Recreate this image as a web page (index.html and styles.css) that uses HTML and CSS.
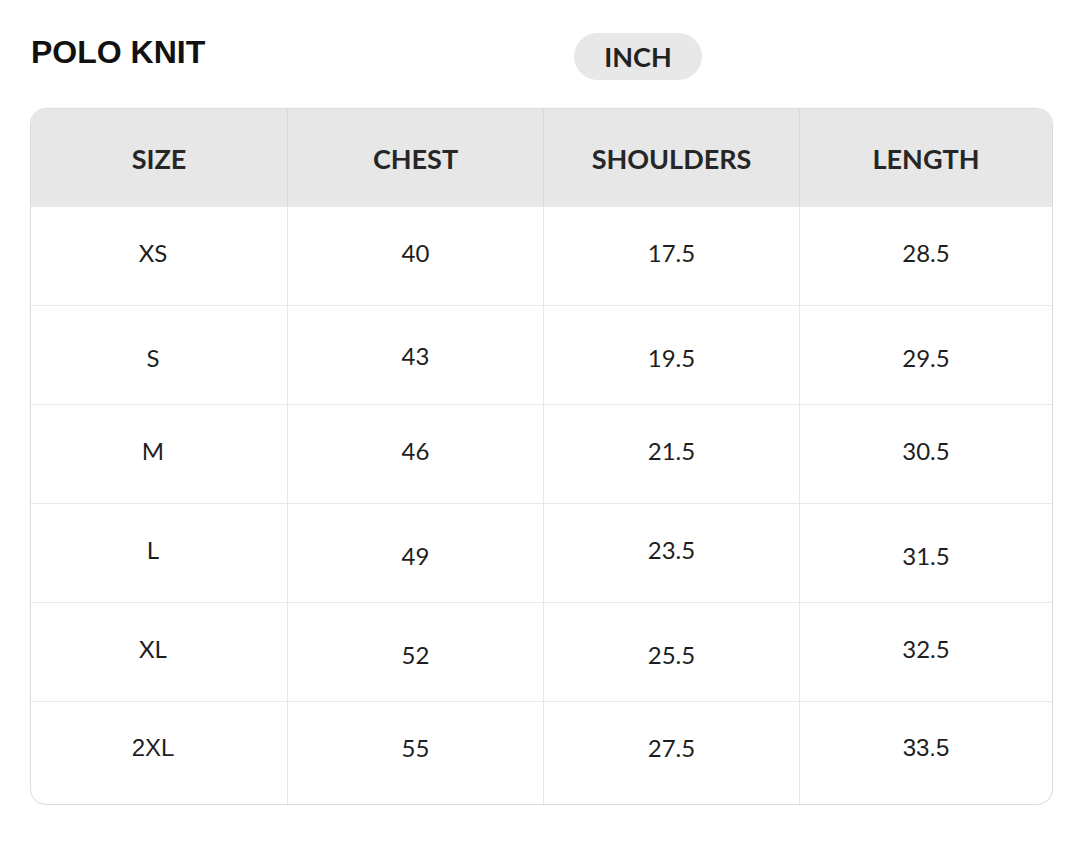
FILE: index.html
```html
<!DOCTYPE html>
<html lang="en">
<head>
<meta charset="utf-8">
<title>Polo Knit Size Chart</title>
<link rel="stylesheet" href="styles.css">
</head>
<body>
<div class="page">
  <div class="top">
    <h1 class="title">POLO KNIT</h1>
    <span class="unit">INCH</span>
  </div>
  <div class="chart">
    <div class="row head">
      <div class="cell">SIZE</div>
      <div class="cell">CHEST</div>
      <div class="cell">SHOULDERS</div>
      <div class="cell">LENGTH</div>
    </div>
    <div class="row">
      <div class="cell size">XS</div>
      <div class="cell">40</div>
      <div class="cell">17.5</div>
      <div class="cell">28.5</div>
    </div>
    <div class="row">
      <div class="cell size lo">S</div>
      <div class="cell mid">43</div>
      <div class="cell lo">19.5</div>
      <div class="cell lo">29.5</div>
    </div>
    <div class="row">
      <div class="cell size">M</div>
      <div class="cell">46</div>
      <div class="cell">21.5</div>
      <div class="cell">30.5</div>
    </div>
    <div class="row">
      <div class="cell size">L</div>
      <div class="cell lo">49</div>
      <div class="cell">23.5</div>
      <div class="cell lo">31.5</div>
    </div>
    <div class="row">
      <div class="cell size">XL</div>
      <div class="cell lo">52</div>
      <div class="cell lo">25.5</div>
      <div class="cell">32.5</div>
    </div>
    <div class="row last">
      <div class="cell size alt">2XL</div>
      <div class="cell">55</div>
      <div class="cell">27.5</div>
      <div class="cell alt">33.5</div>
    </div>
  </div>
</div>
</body>
</html>
```

FILE: styles.css
```css
* { box-sizing: border-box; }

html, body {
  margin: 0;
  padding: 0;
  background: #ffffff;
}

.page {
  width: 1080px;
  padding: 33px 0 0 30px;
}

.top {
  display: flex;
  align-items: flex-start;
}

.title {
  flex: 0 0 543px;
  margin: 3px 0 0 1px;
  font-family: "Liberation Sans", Arial, sans-serif;
  font-weight: 700;
  font-size: 32px;
  line-height: 32px;
  color: #111111;
}

.unit {
  display: flex;
  align-items: center;
  justify-content: center;
  width: 128px;
  height: 47px;
  border-radius: 24px;
  background: #e8e8e8;
  font-family: Lato, "Open Sans", sans-serif;
  font-weight: 700;
  font-size: 27px;
  color: #222222;
}

.chart {
  margin-top: 28px;
  width: 1023px;
  border: 1px solid #dcdcdc;
  border-radius: 16px;
  overflow: hidden;
  box-shadow: 0 0 1px rgba(0, 0, 0, 0.08);
}

.row {
  display: grid;
  grid-template-columns: 256px 256px 256px 253px;
  height: 99px;
  border-bottom: 1px solid #e8e8e8;
}

.row.last {
  height: 102px;
  border-bottom: none;
}

.row.head {
  height: 98px;
  background: #e7e7e7;
  border-bottom: none;
}

.cell {
  display: flex;
  align-items: center;
  justify-content: center;
  padding-bottom: 8px;
  font-family: Lato, "Open Sans", sans-serif;
  font-size: 24px;
  color: #1e1e1e;
  border-left: 1px solid #e6e6e6;
}

.cell:first-child { border-left: none; }

.last .cell { padding-bottom: 11px; }

.head .cell {
  padding-bottom: 0;
  font-weight: 700;
  font-size: 27px;
  color: #262626;
  border-left-color: #dadada;
}

.cell.size { padding-right: 12px; }

.cell.lo {
  padding-top: 5px;
  padding-bottom: 0;
}

.cell.mid { padding-bottom: 0; }

.cell.alt {
  font-family: "Liberation Sans", Arial, sans-serif;
  font-size: 24px;
}
```
